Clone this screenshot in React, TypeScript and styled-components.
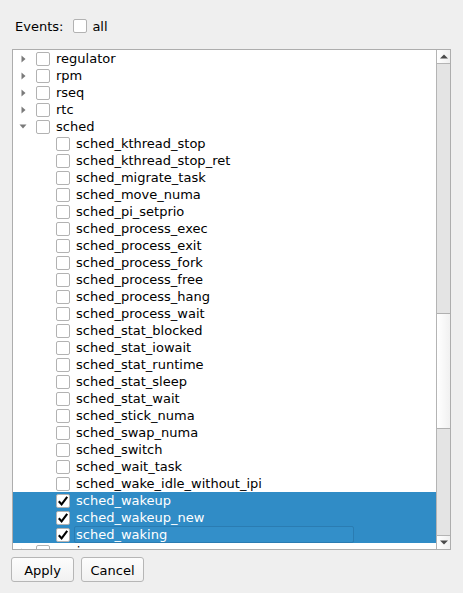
import React from "react";
import styled, { createGlobalStyle } from "styled-components";

const GlobalStyle = createGlobalStyle`
  html, body { margin: 0; padding: 0; background: #efefef; }
  body {
    font-family: "DejaVu Sans", "Liberation Sans", sans-serif;
    font-size: 13px;
    color: #000000;
  }
`;

const Page = styled.div`
  width: 463px;
  height: 593px;
  padding-left: 11px;
  box-sizing: border-box;
  display: flex;
  flex-direction: column;
  overflow: hidden;
`;

const Header = styled.div`
  display: flex;
  align-items: center;
  height: 14px;
  margin-top: 19px;
  margin-left: 4px;
`;

const Label = styled.span`
  line-height: 15px;
  padding-top: 1px;
  white-space: pre;
`;

const Box = styled.span`
  box-sizing: border-box;
  flex: none;
  width: 14px;
  height: 14px;
  border: 1px solid #b2b2b2;
  border-radius: 2px;
  background: #ffffff;
  display: flex;
  align-items: center;
  justify-content: center;
`;

const HeaderBox = styled(Box)`
  margin-left: 10px;
  margin-right: 5px;
`;

const Frame = styled.div`
  margin-top: 16px;
  margin-left: 1px;
  width: 439px;
  height: 501px;
  box-sizing: border-box;
  border: 1px solid #adadad;
  background: #ffffff;
  display: flex;
`;

const List = styled.div`
  flex: 1;
  overflow: hidden;
  display: flex;
  flex-direction: column;
`;

const Row = styled.div<{ $selected?: boolean }>`
  flex: none;
  height: 17px;
  display: flex;
  align-items: center;
  background: ${(p) => (p.$selected ? "#308cc6" : "transparent")};
  color: ${(p) => (p.$selected ? "#ffffff" : "#000000")};
  position: relative;
`;

const Branch = styled.span`
  flex: none;
  width: 20px;
  height: 17px;
  display: flex;
  align-items: center;
  justify-content: center;
`;

const Indent = styled.span<{ $depth: number }>`
  flex: none;
  width: ${(p) => 3 + p.$depth * 20}px;
`;

const ItemText = styled.span`
  margin-left: 6px;
  line-height: 17px;
  white-space: pre;
  position: relative;
`;

const FocusRect = styled.span`
  position: absolute;
  left: 61px;
  top: 0;
  width: 280px;
  height: 17px;
  box-sizing: border-box;
  border: 1px solid #2a7cb2;
  border-radius: 2px;
  background: #338fc9;
`;

const Scrollbar = styled.div`
  flex: none;
  width: 14px;
  box-sizing: border-box;
  border-left: 1px solid #b4b4b4;
  display: flex;
  flex-direction: column;
  background: #e4e4e4;
`;

const ArrowButton = styled.div<{ $bottom?: boolean }>`
  flex: none;
  height: 14px;
  box-sizing: border-box;
  background: linear-gradient(to right, #ffffff, #f0f0f0);
  ${(p) => (p.$bottom ? "border-top: 1px solid #b4b4b4;" : "border-bottom: 1px solid #b4b4b4;")}
  display: flex;
  align-items: center;
  justify-content: center;
`;

const Track = styled.div`
  flex: 1;
  position: relative;
`;

const Handle = styled.div`
  position: absolute;
  left: 0;
  right: 0;
  box-sizing: border-box;
  border-top: 1px solid #b0b0b0;
  border-bottom: 1px solid #b0b0b0;
  background: linear-gradient(to right, #ffffff, #f1f1f1);
`;

const Buttons = styled.div`
  display: flex;
  gap: 7px;
  margin-top: 7px;
`;

const Button = styled.button<{ $width: number }>`
  width: ${(p) => p.$width}px;
  height: 25px;
  box-sizing: border-box;
  border: 1px solid #b6b6b6;
  border-radius: 3px;
  background: linear-gradient(to bottom, #fdfdfd, #f1f1f1);
  font-family: "DejaVu Sans", "Liberation Sans", sans-serif;
  font-size: 13px;
  color: #000000;
  padding: 0;
  padding-top: 1px;
`;

const Check = () => (
  <svg width="12" height="12" viewBox="0 0 12 12">
    <path d="M1.8 6.2 L4.6 9.4 L10.2 1.8" fill="none" stroke="#000" strokeWidth="2.1" />
  </svg>
);

const Arrow = ({ open }: { open: boolean }) =>
  open ? (
    <svg width="8" height="5" viewBox="0 0 8 5">
      <path d="M0.5 0.5 L7.5 0.5 L4 4.5 Z" fill="#7a7a7a" />
    </svg>
  ) : (
    <svg width="5" height="8" viewBox="0 0 5 8">
      <path d="M0.5 0.5 L4.5 4 L0.5 7.5 Z" fill="#7a7a7a" />
    </svg>
  );

const ScrollArrow = ({ up }: { up: boolean }) => (
  <svg width="8" height="5" viewBox="0 0 8 5">
    <path d={up ? "M0 4.5 L8 4.5 L4 0.5 Z" : "M0 0.5 L8 0.5 L4 4.5 Z"} fill="#4a4a4a" />
  </svg>
);

type Item = {
  name: string;
  depth: number;
  branch?: "open" | "closed";
  checked?: boolean;
  selected?: boolean;
  focused?: boolean;
};

const children = [
  "sched_kthread_stop",
  "sched_kthread_stop_ret",
  "sched_migrate_task",
  "sched_move_numa",
  "sched_pi_setprio",
  "sched_process_exec",
  "sched_process_exit",
  "sched_process_fork",
  "sched_process_free",
  "sched_process_hang",
  "sched_process_wait",
  "sched_stat_blocked",
  "sched_stat_iowait",
  "sched_stat_runtime",
  "sched_stat_sleep",
  "sched_stat_wait",
  "sched_stick_numa",
  "sched_swap_numa",
  "sched_switch",
  "sched_wait_task",
  "sched_wake_idle_without_ipi",
];

const items: Item[] = [
  { name: "regulator", depth: 0, branch: "closed" },
  { name: "rpm", depth: 0, branch: "closed" },
  { name: "rseq", depth: 0, branch: "closed" },
  { name: "rtc", depth: 0, branch: "closed" },
  { name: "sched", depth: 0, branch: "open" },
  ...children.map((name) => ({ name, depth: 1 })),
  { name: "sched_wakeup", depth: 1, checked: true, selected: true },
  { name: "sched_wakeup_new", depth: 1, checked: true, selected: true },
  { name: "sched_waking", depth: 1, checked: true, selected: true, focused: true },
  { name: "scsi", depth: 0, branch: "closed" },
];

export default function App() {
  const trackHeight = 471;
  const handleTop = 249;
  const handleHeight = 116;
  return (
    <>
      <GlobalStyle />
      <Page>
        <Header>
          <Label>Events:</Label>
          <HeaderBox />
          <Label>all</Label>
        </Header>
        <Frame>
          <List>
            {items.map((it) => (
              <Row key={it.name} $selected={it.selected}>
                {it.focused && <FocusRect />}
                <Branch>{it.branch && <Arrow open={it.branch === "open"} />}</Branch>
                <Indent $depth={it.depth} />
                <Box>{it.checked && <Check />}</Box>
                <ItemText>{it.name}</ItemText>
              </Row>
            ))}
          </List>
          <Scrollbar>
            <ArrowButton>
              <ScrollArrow up />
            </ArrowButton>
            <Track>
              <Handle
                style={{ top: `${(handleTop / trackHeight) * 100}%`, height: handleHeight }}
              />
            </Track>
            <ArrowButton $bottom>
              <ScrollArrow up={false} />
            </ArrowButton>
          </Scrollbar>
        </Frame>
        <Buttons>
          <Button $width={63}>Apply</Button>
          <Button $width={63}>Cancel</Button>
        </Buttons>
      </Page>
    </>
  );
}
